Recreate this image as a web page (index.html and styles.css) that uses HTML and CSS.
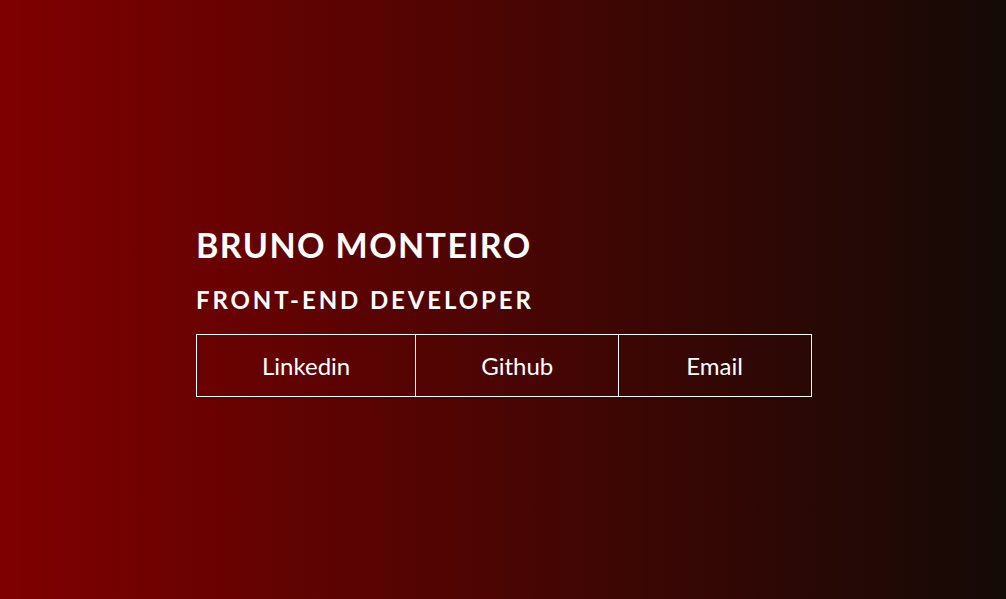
FILE: index.html
```html
<!DOCTYPE html>
<html lang="en">
<head>
<meta charset="utf-8">
<title>Bruno Monteiro</title>
<link rel="stylesheet" href="styles.css">
</head>
<body>
<main class="hero">
  <div class="intro">
    <h1 class="name">BRUNO MONTEIRO</h1>
    <h2 class="role">FRONT-END DEVELOPER</h2>
    <nav class="links">
      <a class="link" href="#">Linkedin</a>
      <a class="link" href="#">Github</a>
      <a class="link link-wide" href="#">Email</a>
    </nav>
  </div>
</main>
</body>
</html>
```
FILE: styles.css
```css
html, body {
  margin: 0;
  padding: 0;
  height: 100%;
}
body {
  font-family: Lato, "Open Sans", sans-serif;
  color: #fff;
  background: linear-gradient(to right, #800000 0%, #140a06 100%);
}
.hero {
  height: 100%;
  display: flex;
  align-items: flex-start;
  padding-left: 196px;
  padding-top: 224px;
  box-sizing: border-box;
}
.intro {
  display: flex;
  flex-direction: column;
  align-items: flex-start;
}
.name {
  margin: 0;
  font-size: 34px;
  font-weight: 700;
  letter-spacing: 1.4px;
  line-height: 42px;
}
.role {
  margin: 20px 0 0;
  font-size: 24px;
  font-weight: 700;
  letter-spacing: 2.9px;
  line-height: 28px;
}
.links {
  display: flex;
  margin-top: 20px;
}
.link {
  display: block;
  color: #fff;
  text-decoration: none;
  font-size: 24px;
  line-height: 28px;
  padding: 17px 65px 16px;
  border: 1px solid #fff;
}
.link + .link {
  margin-left: -1px;
}
.link-wide {
  padding-left: 67px;
  padding-right: 68px;
}
```
